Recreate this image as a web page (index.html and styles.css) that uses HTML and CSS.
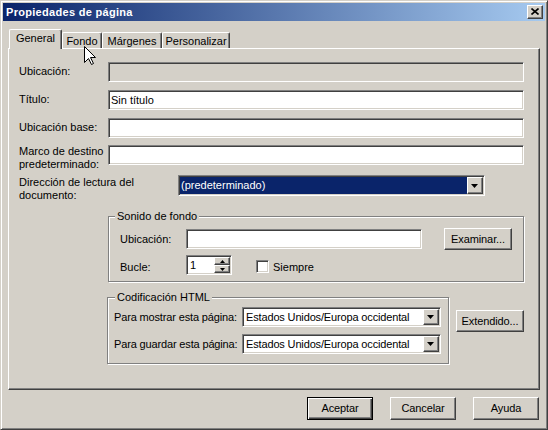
FILE: index.html
```html
<!DOCTYPE html>
<html lang="es">
<head>
<meta charset="utf-8">
<title>Propiedades de página</title>
<link rel="stylesheet" href="styles.css">
</head>
<body>
<div class="window">
  <div class="titlebar">
    <span class="title">Propiedades de página</span>
    <span class="close raised"><svg width="8" height="7" viewBox="0 0 8 7"><path d="M0.5 0.5 L7.5 6.5 M7.5 0.5 L0.5 6.5" stroke="#000" stroke-width="1.6" fill="none"/></svg></span>
  </div>
  <div class="tabs">
    <div class="tab active t-general">General</div>
    <div class="tab t-fondo">Fondo</div>
    <div class="tab t-margenes">Márgenes</div>
    <div class="tab t-pers">Personalizar</div>
  </div>
  <div class="panel">
    <div class="row r1">
      <span class="lbl">Ubicación:</span>
      <span class="field wide disabled"></span>
    </div>
    <div class="row r2">
      <span class="lbl">Título:</span>
      <span class="field wide">Sin título</span>
    </div>
    <div class="row r3">
      <span class="lbl">Ubicación base:</span>
      <span class="field wide"></span>
    </div>
    <div class="row two r4">
      <span class="lbl">Marco de destino<br>predeterminado:</span>
      <span class="field wide"></span>
    </div>
    <div class="row two r5">
      <span class="lbl lbl-dir">Dirección de lectura del<br>documento:</span>
      <span class="combo combo-dir">
        <span class="val selected">(predeterminado)</span>
        <span class="drop raised"><svg width="7" height="4" viewBox="0 0 7 4"><path d="M0 0 H7 L3.5 4 Z" fill="#000"/></svg></span>
      </span>
    </div>
    <fieldset class="group g-sound">
      <legend>Sonido de fondo</legend>
      <div class="grow gr1">
        <span class="glbl">Ubicación:</span>
        <span class="field f-snd"></span>
        <span class="btn b-exam">Examinar...</span>
      </div>
      <div class="grow gr2">
        <span class="glbl">Bucle:</span>
        <span class="field spin"><span class="spin-val">1</span><span class="spin-btns"><span class="sb raised"><svg width="5" height="3" viewBox="0 0 5 3"><path d="M0 3 H5 L2.5 0 Z" fill="#000"/></svg></span><span class="sb raised"><svg width="5" height="3" viewBox="0 0 5 3"><path d="M0 0 H5 L2.5 3 Z" fill="#000"/></svg></span></span></span>
        <span class="check"></span>
        <span class="check-lbl">Siempre</span>
      </div>
    </fieldset>
    <div class="enc-row">
      <fieldset class="group g-enc">
        <legend>Codificación HTML</legend>
        <div class="erow">
          <span class="elbl">Para mostrar esta página:</span>
          <span class="combo combo-enc">
            <span class="val">Estados Unidos/Europa occidental</span>
            <span class="drop raised"><svg width="7" height="4" viewBox="0 0 7 4"><path d="M0 0 H7 L3.5 4 Z" fill="#000"/></svg></span>
          </span>
        </div>
        <div class="erow erow2">
          <span class="elbl">Para guardar esta página:</span>
          <span class="combo combo-enc">
            <span class="val">Estados Unidos/Europa occidental</span>
            <span class="drop raised"><svg width="7" height="4" viewBox="0 0 7 4"><path d="M0 0 H7 L3.5 4 Z" fill="#000"/></svg></span>
          </span>
        </div>
      </fieldset>
      <span class="btn b-ext">Extendido...</span>
    </div>
  </div>
  <div class="buttons">
    <span class="btn dbtn default">Aceptar</span>
    <span class="btn dbtn">Cancelar</span>
    <span class="btn dbtn">Ayuda</span>
  </div>
  <svg class="cursor" width="13" height="20" viewBox="0 0 13 20"><path d="M0.5 0.5 V16.5 L4.5 12.5 L7.5 18.5 L9.5 17.5 L6.5 11.5 H11.5 Z" fill="#fff" stroke="#000" stroke-width="1" stroke-linejoin="miter"/></svg>
</div>
</body>
</html>
```

FILE: styles.css
```css
html, body {
  margin: 0;
  padding: 0;
  background: #d4d0c8;
}
body {
  font-family: "Liberation Sans", Arial, sans-serif;
  font-size: 11px;
  color: #000;
}
.window {
  position: relative;
  width: 548px;
  height: 430px;
  box-sizing: border-box;
  background: #d4d0c8;
  border: 1px solid;
  border-color: #d4d0c8 #404040 #404040 #d4d0c8;
  box-shadow: inset 1px 1px #fff, inset -1px -1px #808080;
  padding: 2px;
}
.titlebar {
  height: 18px;
  display: flex;
  align-items: center;
  justify-content: space-between;
  background: linear-gradient(to right, #0a246a, #a6caf0);
}
.title {
  color: #fff;
  font-weight: bold;
  letter-spacing: 0.3px;
  padding-left: 3px;
  line-height: 18px;
}
.raised {
  background: #d4d0c8;
  border: 1px solid;
  border-color: #fff #404040 #404040 #fff;
  box-shadow: inset -1px -1px #808080;
  box-sizing: border-box;
}
.close {
  width: 16px;
  height: 14px;
  margin-right: 2px;
  display: flex;
  align-items: center;
  justify-content: center;
  padding: 0 1px 1px 0;
}
.close svg { display: block; }

/* tabs */
.tabs {
  position: relative;
  z-index: 1;
  display: flex;
  align-items: flex-end;
  height: 19px;
  margin-top: 8px;
  padding-left: 6px;
}
.tab {
  box-sizing: border-box;
  height: 16px;
  line-height: 16px;
  text-align: center;
  border-top: 1px solid #fff;
  border-left: 1px solid #fff;
  border-right: 1px solid #404040;
  box-shadow: inset -1px 0 #808080;
  border-radius: 2px 2px 0 0;
  background: #d4d0c8;
}
.tab.active {
  height: 20px;
  line-height: 17px;
  margin-bottom: -1px;
}
.t-general { width: 53px; }
.t-fondo { width: 40px; }
.t-margenes { width: 60px; }
.t-pers { width: 68px; }

/* panel */
.panel {
  margin-left: 5px;
  width: 532px;
  height: 342px;
  box-sizing: border-box;
  padding: 13px 0 0 10px;
  border: 1px solid;
  border-color: #fff #404040 #404040 #fff;
  box-shadow: inset -1px -1px #808080;
}
.row {
  display: flex;
  align-items: center;
}
.row.two { align-items: flex-start; }
.lbl {
  width: 89px;
  flex: none;
  line-height: 13px;
}
.r1 .lbl, .r2 .lbl, .r3 .lbl { margin-top: -2px; }
.lbl-dir { width: 159px; }
.r2, .r3 { margin-top: 8px; }
.r4 { margin-top: 7px; }
.r5 { margin-top: 5px; }

.field {
  display: block;
  box-sizing: border-box;
  height: 20px;
  background: #fff;
  border: 1px solid;
  border-color: #808080 #fff #fff #808080;
  box-shadow: inset 1px 1px #404040, inset -1px -1px #d4d0c8;
  padding: 0 2px;
  line-height: 18px;
  white-space: nowrap;
  flex: none;
}
.field.wide { width: 416px; }
.field.disabled { background: #d4d0c8; }

.combo {
  display: flex;
  box-sizing: border-box;
  background: #fff;
  border: 1px solid;
  border-color: #808080 #fff #fff #808080;
  box-shadow: inset 1px 1px #404040, inset -1px -1px #d4d0c8;
  padding: 1px;
  flex: none;
}
.combo .val {
  flex: 1;
  padding-left: 2px;
  white-space: nowrap;
  overflow: hidden;
}
.combo .val.selected {
  background: #0a246a;
  color: #fff;
  padding-left: 1px;
}
.combo .drop {
  width: 16px;
  flex: none;
  display: flex;
  align-items: center;
  justify-content: center;
  padding: 0 1px 0 0;
}
.combo .drop svg { display: block; }
.combo-dir {
  width: 307px;
  height: 21px;
  margin-top: -1px;
  line-height: 17px;
}
.combo-enc {
  width: 199px;
  height: 20px;
  line-height: 16px;
}

/* buttons */
.btn {
  display: flex;
  align-items: center;
  justify-content: center;
  box-sizing: border-box;
  background: #d4d0c8;
  border: 1px solid;
  border-color: #fff #404040 #404040 #fff;
  box-shadow: inset -1px -1px #808080;
  flex: none;
  padding-bottom: 1px;
  letter-spacing: -0.1px;
}
.btn.default {
  border-color: #000;
  box-shadow: inset 1px 1px #fff, inset -1px -1px #404040, inset -2px -2px #808080;
}

/* group boxes */
.group {
  margin: 0;
  box-sizing: border-box;
  border: 1px solid #808080;
  box-shadow: inset 1px 1px #fff, 1px 1px #fff;
  min-width: 0;
}
.group legend {
  line-height: 13px;
  padding: 0 2px;
  background: #d4d0c8;
}
.g-sound {
  margin: 8px 0 0 89px;
  width: 416px;
  padding: 5px 0 6px 11px;
}
.g-sound legend { margin-left: -5px; }
.grow {
  display: flex;
  align-items: center;
}
.gr2 { margin-top: 5px; }
.gr2 .glbl { margin-top: 3px; }
.glbl { width: 66px; flex: none; }
.f-snd { width: 236px; }
.b-exam {
  width: 68px;
  height: 22px;
  margin-left: 22px;
}
.spin {
  width: 46px;
  display: flex;
  padding: 1px 1px 1px 0;
}
.spin-val {
  flex: 1;
  padding-left: 3px;
  line-height: 17px;
}
.spin-btns {
  width: 16px;
  display: flex;
  flex-direction: column;
}
.sb {
  flex: 1;
  display: flex;
  align-items: center;
  justify-content: center;
}
.sb svg { display: block; }
.check {
  width: 13px;
  height: 13px;
  box-sizing: border-box;
  margin: 3px 0 0 24px;
  background: #fff;
  border: 1px solid;
  border-color: #808080 #fff #fff #808080;
  box-shadow: inset 1px 1px #404040, inset -1px -1px #d4d0c8;
  flex: none;
}
.check-lbl { margin: 3px 0 0 4px; }

.enc-row {
  display: flex;
  align-items: flex-start;
  margin: 9px 0 0 88px;
}
.g-enc {
  width: 342px;
  padding: 3px 0 9px 6px;
  letter-spacing: -0.15px;
}
.g-enc legend { margin-left: 1px; letter-spacing: 0; }
.erow {
  display: flex;
  align-items: center;
}
.erow2 { margin-top: 7px; }
.elbl { width: 128px; flex: none; }
.b-ext {
  width: 68px;
  height: 22px;
  margin: 19px 0 0 7px;
}

.buttons {
  display: flex;
  justify-content: flex-end;
  gap: 17px;
  margin-top: 7px;
  padding-right: 6px;
}
.dbtn {
  width: 66px;
  height: 23px;
}

.cursor {
  position: absolute;
  left: 83px;
  top: 45px;
  z-index: 5;
}
```
